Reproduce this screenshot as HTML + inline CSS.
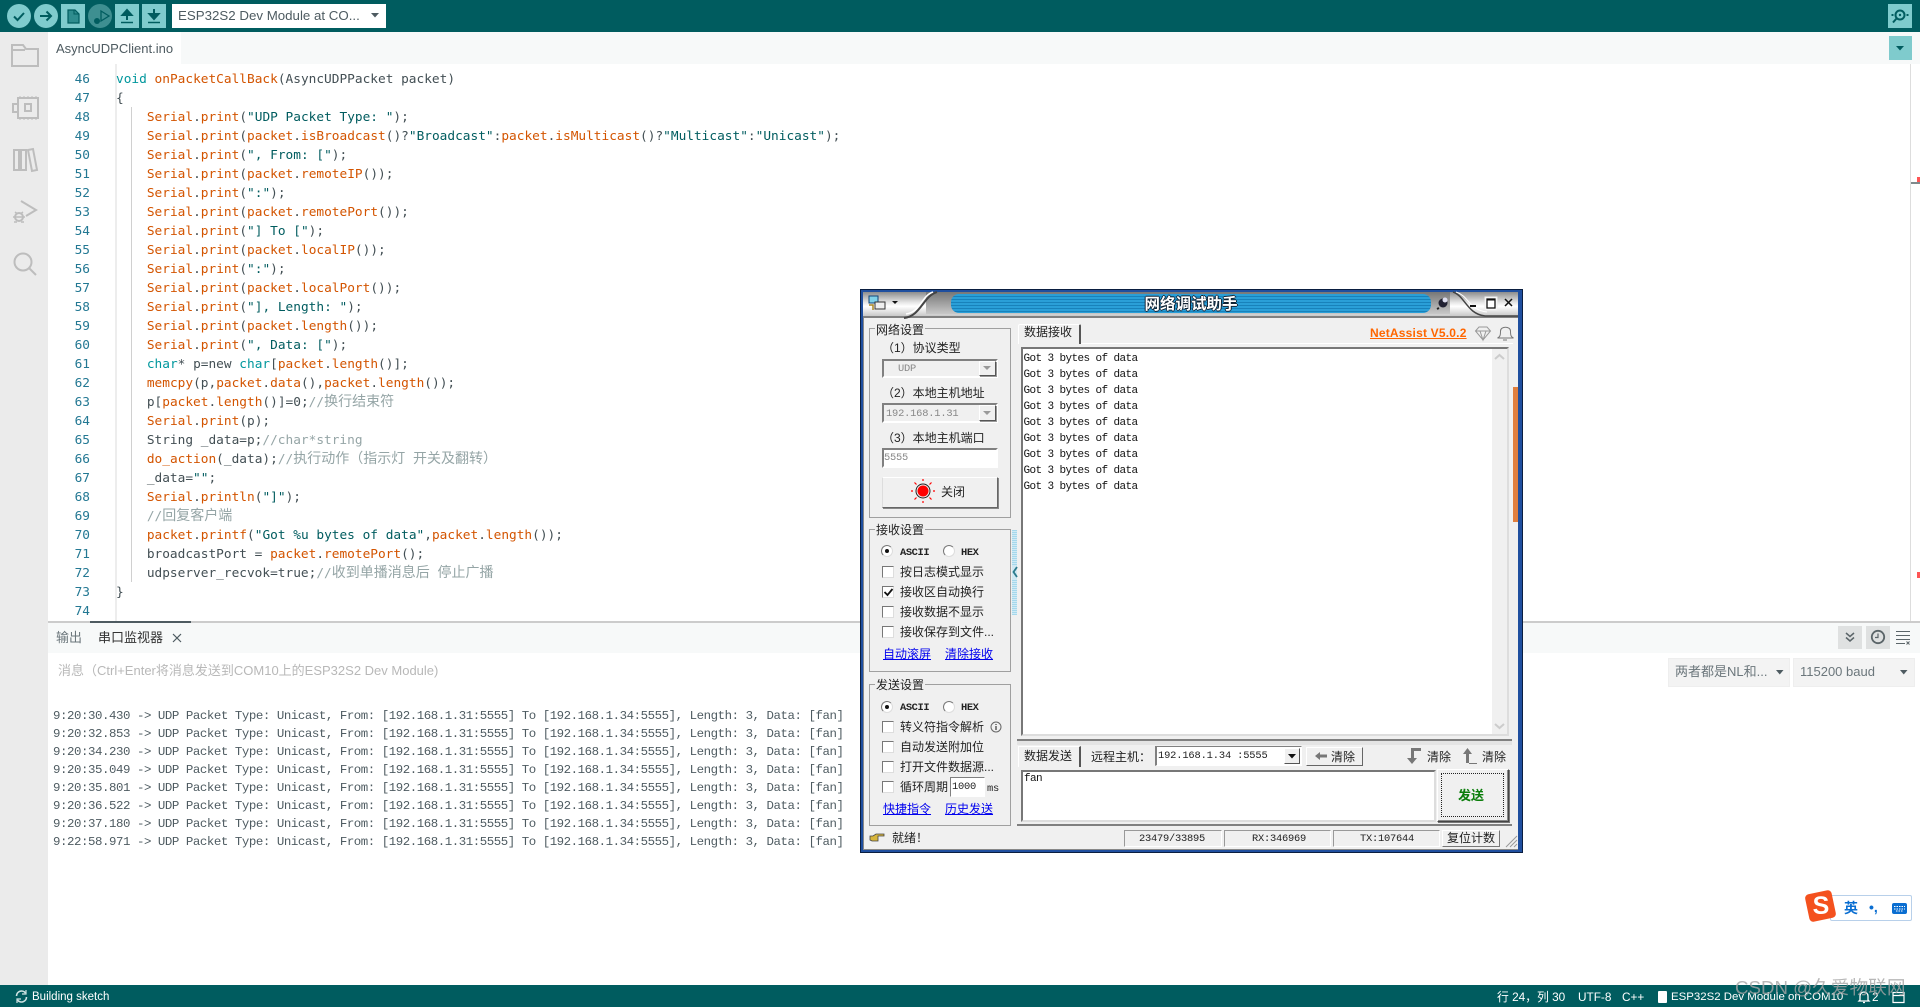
<!DOCTYPE html>
<html lang="zh"><head><meta charset="utf-8"><title>Arduino IDE</title>
<style>
html,body{margin:0;padding:0;width:1920px;height:1007px;overflow:hidden;background:#fff}
body{position:relative;font-family:"Liberation Sans","Noto Sans CJK SC",sans-serif;color:#4e5b61}
.a{position:absolute;box-sizing:border-box}
.t{position:absolute;white-space:nowrap;line-height:16px;height:16px}
svg{position:absolute;overflow:visible}
#code{position:absolute;left:116px;top:69.500px;font:12.8px/19px "DejaVu Sans Mono","Noto Sans CJK SC",monospace;color:#434f54;white-space:pre}
#nums{position:absolute;left:60px;width:30px;top:69.500px;text-align:right;font:12.8px/19px "DejaVu Sans Mono",monospace;color:#237893;white-space:pre}
.f{color:#d35400}.k{color:#00979d}.s{color:#005c5f}.c{color:#95a5a6}
.z{font-size:14px;line-height:0;font-family:"Noto Sans CJK SC",sans-serif}
#ser{position:absolute;left:53px;top:707px;font:12.4px/18px "Liberation Mono",monospace;letter-spacing:-.44px;color:#4e5b61;white-space:pre}
.b{font-family:"Liberation Sans","WenQuanYi Zen Hei","Noto Sans CJK SC",sans-serif;font-size:12px;color:#222}
.m{font-family:"Liberation Mono",monospace;font-size:10.4px;letter-spacing:-.24px;color:#222}
.sunk{border:2px solid;border-color:#808080 #fff #fff #808080;background:#fff}
.grp{border:1px solid #a0a0a0}
.lb{background:#f0f0f0;padding:0 1px}
.cb{position:absolute;width:12px;height:12px;background:#fff;border:1px solid;border-color:#777 #ddd #ddd #777;box-sizing:border-box}
.rd{position:absolute;width:12px;height:12px;border-radius:50%;background:#fff;border:1px solid;border-color:#777 #ddd #ddd #777;box-sizing:border-box}
.lk{color:#0000ee;text-decoration:underline}
.btn{background:#f0f0f0;border:1px solid;border-color:#fff #555 #555 #fff;box-shadow:1px 1px 0 #999}
.tb{position:absolute;width:24px;height:24px;background:#7fcbcd;top:4px}
</style></head><body>

<!-- top bar -->
<div class="a" style="left:0;top:0;width:1920px;height:32px;background:#005c5f"></div>
<div class="a" style="left:7px;top:4px;width:24px;height:24px;border-radius:50%;background:#7fcbcd"></div>
<div class="a" style="left:34px;top:4px;width:24px;height:24px;border-radius:50%;background:#7fcbcd"></div>
<div class="tb" style="left:61px"></div>
<div class="a" style="left:88px;top:4px;width:24px;height:24px;border-radius:50%;background:#3e8f91"></div>
<div class="tb" style="left:115px"></div>
<div class="tb" style="left:142px"></div>
<svg style="left:0;top:0" width="170" height="32" fill="none" stroke="#005c5f" stroke-width="2">
<path d="M14 16.500l3.500 3.500 6.500-7"/>
<path d="M40 16h11M46.500 11.500L51 16l-4.500 4.500"/>
<path d="M68 10h7l4 4v9H68z" fill="#2e8c8e" stroke-width="1.200"/>
<path d="M74 10v4h5" stroke-width="1"/>
<path d="M101 11l8 5-8 5z" stroke="#005c5f" stroke-width="1.300"/>
<circle cx="97" cy="21" r="3" fill="#005c5f" stroke="none"/>
<path d="M127 20v-9M122.500 15l4.500-5 4.500 5z" fill="#005c5f"/><path d="M121 22.500h12" stroke-width="1.500"/>
<path d="M154 9v9M149.500 14l4.500 5 4.500-5z" fill="#005c5f"/><path d="M148 22.500h12" stroke-width="1.500"/>
</svg>
<div class="a" style="left:172px;top:4px;width:214px;height:24px;background:#fff"></div>
<div class="t" style="left:178px;top:8px;font-size:13.300px;color:#4e5b61">ESP32S2 Dev Module at CO...</div>
<svg style="left:371px;top:13px" width="9" height="5"><path d="M0 0h8l-4 4.500z" fill="#4e5b61"/></svg>
<div class="tb" style="left:1888px"></div>
<svg style="left:1888px;top:4px" width="24" height="24" fill="none" stroke="#005c5f" stroke-width="2"><circle cx="12" cy="11" r="4.500"/><circle cx="12" cy="11" r="1.200" fill="#005c5f" stroke="none"/><path d="M8.500 14.500L5 18.500M3.500 11h2M18.500 11h2" /></svg>

<!-- tab bar -->
<div class="a" style="left:48px;top:32px;width:1872px;height:32px;background:#f7f9f9"></div>
<div class="a" style="left:48px;top:32px;width:133px;height:32px;background:#fff"></div>
<div class="t" style="left:56px;top:41px;font-size:13px;color:#4e5b61">AsyncUDPClient.ino</div>
<div class="a" style="left:1889px;top:36px;width:23px;height:24px;background:#7fcbcd"></div>
<svg style="left:1896px;top:46px" width="9" height="5"><path d="M0 0h8l-4 4.500z" fill="#005c5f"/></svg>

<!-- sidebar -->
<div class="a" style="left:0;top:32px;width:48px;height:953px;background:#ebebeb"></div>
<svg style="left:0;top:32px" width="48" height="260" fill="none" stroke="#bdbdbd" stroke-width="2">
<path d="M12 34V13h11l3 4h12v17z"/><path d="M12 18h13"/>
<path d="M18 66h20v20H18zM18 72h-5v8h5"/><rect x="25" y="72" width="6" height="7"/><path d="M20 66v-2M24 66v-2M28 66v-2M32 66v-2M36 66v-2M20 88v-2M24 88v-2M28 88v-2M32 88v-2M36 88v-2" stroke-width="1"/>
<path d="M14 118h5v20h-5zM21 118h5v20h-5zM28 118l5-1 4 21-5 1z"/>
<path d="M21 169l15 9-10 6"/><circle cx="19" cy="185" r="4" stroke-width="2"/><path d="M13 185h12M14 190h3M21 190h3M15 180l2 1.500M23 180l-2 1.500" stroke-width="1.500"/>
<circle cx="23" cy="230" r="8.500"/><path d="M29 236l7 7"/>
</svg>

<!-- editor -->
<div id="nums">46
47
48
49
50
51
52
53
54
55
56
57
58
59
60
61
62
63
64
65
66
67
68
69
70
71
72
73
74</div>
<div class="a" style="left:115px;top:64px;width:2px;height:558px;background:#ededed"></div>
<div class="a" style="left:131px;top:107px;width:1px;height:475px;background:#d0d0d0"></div>
<div id="code"><span class="k">void</span> <span class="f">onPacketCallBack</span>(AsyncUDPPacket packet)
{
    <span class="f">Serial</span>.<span class="f">print</span>(<span class="s">"UDP Packet Type: "</span>);
    <span class="f">Serial</span>.<span class="f">print</span>(<span class="f">packet</span>.<span class="f">isBroadcast</span>()?<span class="s">"Broadcast"</span>:<span class="f">packet</span>.<span class="f">isMulticast</span>()?<span class="s">"Multicast"</span>:<span class="s">"Unicast"</span>);
    <span class="f">Serial</span>.<span class="f">print</span>(<span class="s">", From: ["</span>);
    <span class="f">Serial</span>.<span class="f">print</span>(<span class="f">packet</span>.<span class="f">remoteIP</span>());
    <span class="f">Serial</span>.<span class="f">print</span>(<span class="s">":"</span>);
    <span class="f">Serial</span>.<span class="f">print</span>(<span class="f">packet</span>.<span class="f">remotePort</span>());
    <span class="f">Serial</span>.<span class="f">print</span>(<span class="s">"] To ["</span>);
    <span class="f">Serial</span>.<span class="f">print</span>(<span class="f">packet</span>.<span class="f">localIP</span>());
    <span class="f">Serial</span>.<span class="f">print</span>(<span class="s">":"</span>);
    <span class="f">Serial</span>.<span class="f">print</span>(<span class="f">packet</span>.<span class="f">localPort</span>());
    <span class="f">Serial</span>.<span class="f">print</span>(<span class="s">"], Length: "</span>);
    <span class="f">Serial</span>.<span class="f">print</span>(<span class="f">packet</span>.<span class="f">length</span>());
    <span class="f">Serial</span>.<span class="f">print</span>(<span class="s">", Data: ["</span>);
    <span class="k">char</span>* p=new <span class="k">char</span>[<span class="f">packet</span>.<span class="f">length</span>()];
    <span class="f">memcpy</span>(p,<span class="f">packet</span>.<span class="f">data</span>(),<span class="f">packet</span>.<span class="f">length</span>());
    p[<span class="f">packet</span>.<span class="f">length</span>()]=0;<span class="c">//<span class="z">换行结束符</span></span>
    <span class="f">Serial</span>.<span class="f">print</span>(p);
    String _data=p;<span class="c">//char*string</span>
    <span class="f">do_action</span>(_data);<span class="c">//<span class="z">执行动作（指示灯</span> <span class="z">开关及翻转）</span></span>
    _data=<span class="s">""</span>;
    <span class="f">Serial</span>.<span class="f">println</span>(<span class="s">"]"</span>);
    <span class="c">//<span class="z">回复客户端</span></span>
    <span class="f">packet</span>.<span class="f">printf</span>(<span class="s">"Got %u bytes of data"</span>,<span class="f">packet</span>.<span class="f">length</span>());
    broadcastPort = <span class="f">packet</span>.<span class="f">remotePort</span>();
    udpserver_recvok=true;<span class="c">//<span class="z">收到单播消息后</span> <span class="z">停止广播</span></span>
}</div>
<div class="a" style="left:1910px;top:64px;width:1px;height:558px;background:#ddd"></div>
<div class="a" style="left:1917px;top:177px;width:3px;height:5px;background:#f55"></div>
<div class="a" style="left:1911px;top:182px;width:9px;height:2px;background:#808a8c"></div>
<div class="a" style="left:1917px;top:572px;width:3px;height:6px;background:#f55"></div>

<!-- bottom panel -->
<div class="a" style="left:48px;top:621px;width:1872px;height:2px;background:#ccc"></div>
<div class="a" style="left:48px;top:623px;width:1872px;height:30px;background:#f7f9f9"></div>
<div class="a" style="left:90px;top:621px;width:101px;height:2px;background:#4e5b61"></div>
<div class="t" style="left:56px;top:630px;font-size:13px;color:#6b767b">输出</div>
<div class="t" style="left:98px;top:630px;font-size:13px;color:#333">串口监视器</div>
<svg style="left:172px;top:633px" width="10" height="10" stroke="#4e5b61" stroke-width="1.200"><path d="M1 1l8 8M9 1l-8 8"/></svg>
<div class="t" style="left:58px;top:663px;font-size:13px;color:#b8b8b8">消息（Ctrl+Enter将消息发送到COM10上的ESP32S2 Dev Module)</div>
<div class="a" style="left:1838px;top:626px;width:24px;height:23px;background:#dfe1e1"></div>
<div class="a" style="left:1866px;top:626px;width:24px;height:23px;background:#dfe1e1"></div>
<svg style="left:1838px;top:626px" width="80" height="23" fill="none" stroke="#5b6569" stroke-width="1.500">
<path d="M8 7l4 3.500 4-3.500M8 11.500l4 3.500 4-3.500"/>
<circle cx="40" cy="11" r="6.200" stroke-width="1.800"/><path d="M40 7.500V11.500h-3" stroke-width="1.200"/>
<path d="M58 5.500h14M58 9.500h14M58 13.500h14M58 17.500h9" stroke-width="1"/><path d="M68.500 15.500l3 3M71.500 15.500l-3 3" stroke-width="1"/>
</svg>
<div class="a" style="left:1668px;top:658px;width:122px;height:29px;background:#f3f3f3;border:1px solid #eee"></div>
<div class="a" style="left:1793px;top:658px;width:122px;height:29px;background:#f3f3f3;border:1px solid #eee"></div>
<div class="t" style="left:1675px;top:664px;font-size:13px;color:#6b767b">两者都是NL和...</div>
<div class="t" style="left:1800px;top:664px;font-size:13px;color:#6b767b">115200 baud</div>
<svg style="left:1776px;top:670px" width="9" height="5"><path d="M0 0h7.500l-3.750 4.500z" fill="#4e5b61"/></svg>
<svg style="left:1900px;top:670px" width="9" height="5"><path d="M0 0h7.500l-3.750 4.500z" fill="#4e5b61"/></svg>
<div id="ser">9:20:30.430 -&gt; UDP Packet Type: Unicast, From: [192.168.1.31:5555] To [192.168.1.34:5555], Length: 3, Data: [fan]
9:20:32.853 -&gt; UDP Packet Type: Unicast, From: [192.168.1.31:5555] To [192.168.1.34:5555], Length: 3, Data: [fan]
9:20:34.230 -&gt; UDP Packet Type: Unicast, From: [192.168.1.31:5555] To [192.168.1.34:5555], Length: 3, Data: [fan]
9:20:35.049 -&gt; UDP Packet Type: Unicast, From: [192.168.1.31:5555] To [192.168.1.34:5555], Length: 3, Data: [fan]
9:20:35.801 -&gt; UDP Packet Type: Unicast, From: [192.168.1.31:5555] To [192.168.1.34:5555], Length: 3, Data: [fan]
9:20:36.522 -&gt; UDP Packet Type: Unicast, From: [192.168.1.31:5555] To [192.168.1.34:5555], Length: 3, Data: [fan]
9:20:37.180 -&gt; UDP Packet Type: Unicast, From: [192.168.1.31:5555] To [192.168.1.34:5555], Length: 3, Data: [fan]
9:22:58.971 -&gt; UDP Packet Type: Unicast, From: [192.168.1.31:5555] To [192.168.1.34:5555], Length: 3, Data: [fan]</div>

<!-- status bar -->
<div class="a" style="left:0;top:985px;width:1920px;height:22px;background:#005c5f"></div>
<svg style="left:15px;top:990px" width="13" height="13" fill="none" stroke="#cfe3e3" stroke-width="1.600"><path d="M1.500 6A5 5 0 0 1 10.500 3M11.500 7A5 5 0 0 1 2.500 10"/><path d="M11 0v4H7M2 13V9h4" stroke-width="1.200"/></svg>
<div class="t" style="left:32px;top:989px;font-size:11.500px;color:#fff">Building sketch</div>
<div class="t" style="left:1497px;top:989px;font-size:11.800px;color:#fff">行 24，列 30</div>
<div class="t" style="left:1578px;top:989px;font-size:11.800px;color:#fff">UTF-8</div>
<div class="t" style="left:1622px;top:989px;font-size:11.800px;color:#fff">C++</div>
<div class="a" style="left:1658px;top:991px;width:9px;height:12px;background:#fff;border-radius:1px"></div>
<div class="t" style="left:1671px;top:989px;font-size:11.450px;color:#fff">ESP32S2 Dev Module on COM10</div>
<svg style="left:1857px;top:990px" width="14" height="14" fill="none" stroke="#fff" stroke-width="1.300"><path d="M3 10V6a4 4 0 0 1 8 0v4l1 1H2zM6 12.500h2"/></svg>
<div class="t" style="left:1872px;top:989px;font-size:11.800px;color:#fff">2</div>
<svg style="left:1892px;top:990px" width="13" height="13" fill="none" stroke="#fff" stroke-width="1.200"><path d="M1 2.500h11v10H1zM1 5.500h11"/></svg>
<div class="t" style="left:1735px;top:976px;height:24px;line-height:24px;font-size:18.700px;color:rgba(165,165,165,.8)">CSDN @久爱物联网</div>

<!-- Sogou -->
<div class="a" style="left:1830px;top:895px;width:82px;height:26px;background:#fff;border:1px solid #b8d0ea;border-radius:2px"></div>
<div class="a" style="left:1807px;top:892px;width:27px;height:28px;background:#f4511e;border-radius:4px;transform:rotate(-12deg)"></div>
<div class="t" style="left:1810px;top:896px;width:22px;text-align:center;font:bold 25px/20px 'Liberation Sans',sans-serif;color:#fff;height:20px">S</div>
<div class="t" style="left:1844px;top:900px;font-size:14px;font-weight:bold;color:#0a6ed1">英</div>
<div class="t" style="left:1869px;top:899px;font-size:14px;font-weight:bold;color:#0a6ed1">•,</div>
<div class="a" style="left:1892px;top:903px;width:15px;height:11px;background:#0a6ed1;border-radius:2px"></div>
<svg style="left:1894px;top:905px" width="11" height="7" stroke="#fff" stroke-width="1"><path d="M0 1.500h11M0 4h11M2 6h7" stroke-dasharray="1.500 1"/></svg>

<!-- NetAssist window -->
<div class="a" style="left:860px;top:289px;width:663px;height:564px;background:#f0f0f0;border:1px solid #0a1e40;box-shadow:inset 0 0 0 1px #1f4f9f,inset 0 0 0 2px #1f4f9f,inset 0 0 0 3px #888"></div>
<div class="a" style="left:863px;top:292px;width:657px;height:24px;background:linear-gradient(#8d8d8d,#e9e9e9 45%,#fff 60%,#c8c8c8)"></div>
<div class="a" style="left:863px;top:316px;width:657px;height:2px;background:#808080"></div>
<div class="a" style="left:926px;top:292px;width:524px;height:22px;background:linear-gradient(#777,#c8c8c8)"></div>
<div class="a" style="left:951px;top:294px;width:480px;height:19px;border-radius:8px 8px 8px 8px;background:repeating-linear-gradient(#2a9fd8 0 2px,#1882bb 2px 3px)"></div>
<svg style="left:863px;top:292px" width="657" height="26" fill="none">
<path d="M41 26 C58 24 60 4 74 0" stroke="#444" stroke-width="2"/><path d="M43 22 C58 20 58 4 70 0" stroke="#fff" stroke-width="1.500"/>
<path d="M590 0 C602 4 604 22 622 24H657" stroke="#444" stroke-width="1.500"/><path d="M593 0C606 4 606 18 624 20" stroke="#fff"/>
<rect x="6" y="4" width="9" height="7" fill="#7fd0e8" stroke="#147" stroke-width="1"/><rect x="12" y="10" width="10" height="7" fill="#eee" stroke="#333" stroke-width="1"/><path d="M6 13h4v5" stroke="#a82" stroke-width="1.500"/>
<path d="M29 9h6l-3 3z" fill="#111"/>
<circle cx="580" cy="11" r="4.500" fill="#223"/><circle cx="582" cy="8" r="2.500" fill="#dde"/><path d="M576 16l-2 1" stroke="#222" stroke-width="2"/>
<path d="M607 14h6" stroke="#111" stroke-width="2"/>
<rect x="622" y="5" width="12" height="13" fill="#fff" stroke="#eee"/><rect x="624" y="7" width="8" height="9" stroke="#111" stroke-width="1.300"/><path d="M624 7.500h8" stroke="#111" stroke-width="2"/>
<path d="M642 7l7 7M649 7l-7 7" stroke="#111" stroke-width="1.500"/></svg>
<div class="t" style="left:1118px;top:295px;width:146px;text-align:center;height:17px;line-height:17px;font-family:'WenQuanYi Zen Hei','Noto Sans CJK SC',sans-serif;font-weight:bold;font-size:15.500px;color:#fff;text-shadow:1px 0 0 #123,-1px 0 0 #123,0 1px 0 #123,0 -1px 0 #123">网络调试助手</div>

<!-- group 1 -->
<div class="a grp" style="left:869px;top:328px;width:142px;height:190px"></div>
<div class="t b lb" style="left:875px;top:322px">网络设置</div>
<div class="t b" style="left:882px;top:340px">（1）协议类型</div>
<div class="a sunk" style="left:882px;top:359px;width:116px;height:19px;background:#f0f0f0"></div>
<div class="t m" style="left:898px;top:361px;color:#888">UDP</div>
<div class="a btn" style="left:979px;top:361px;width:17px;height:15px"></div>
<svg style="left:983px;top:366px" width="9" height="5"><path d="M0 0h8l-4 4z" fill="#999"/></svg>
<div class="t b" style="left:882px;top:385px">（2）本地主机地址</div>
<div class="a sunk" style="left:882px;top:403px;width:116px;height:20px;background:#f0f0f0"></div>
<div class="t m" style="left:886px;top:406px;color:#888;letter-spacing:-.2px">192.168.1.31</div>
<div class="a btn" style="left:979px;top:405px;width:17px;height:16px"></div>
<svg style="left:983px;top:411px" width="9" height="5"><path d="M0 0h8l-4 4z" fill="#999"/></svg>
<div class="t b" style="left:882px;top:430px">（3）本地主机端口</div>
<div class="a sunk" style="left:882px;top:448px;width:116px;height:20px"></div>
<div class="t m" style="left:884px;top:450px;color:#888">5555</div>
<div class="a btn" style="left:882px;top:477px;width:116px;height:31px;border-color:#fff #666 #666 #ddd;box-shadow:1px 1px 0 #888"></div>
<svg style="left:911px;top:479px" width="24" height="24"><circle cx="12" cy="12" r="5.500" fill="#f00"/><circle cx="12" cy="12" r="7" fill="none" stroke="#222"/><path d="M12 0v2M12 22v2M0 12h2M22 12h2M3.500 3.500l2 2M18.500 18.500l2 2M3.500 20.500l2-2M18.500 5.500l2-2" stroke="#f00" stroke-width="1.200"/></svg>
<div class="t b" style="left:941px;top:484px">关闭</div>

<!-- group 2 -->
<div class="a grp" style="left:869px;top:529px;width:142px;height:143px"></div>
<div class="t b lb" style="left:875px;top:522px">接收设置</div>
<div class="rd" style="left:881px;top:545px"></div><div class="a" style="left:885px;top:549px;width:4px;height:4px;border-radius:50%;background:#111"></div>
<div class="t m" style="left:900px;top:545px;letter-spacing:-.4px;font-weight:bold">ASCII</div>
<div class="rd" style="left:943px;top:545px"></div>
<div class="t m" style="left:961px;top:545px;letter-spacing:-.4px;font-weight:bold">HEX</div>
<div class="cb" style="left:882px;top:566px"></div><div class="t b" style="left:900px;top:564px">按日志模式显示</div>
<div class="cb" style="left:882px;top:586px"></div><svg style="left:884px;top:588px" width="9" height="9" fill="none" stroke="#111" stroke-width="1.800"><path d="M.5 4l3 3 5-6"/></svg><div class="t b" style="left:900px;top:584px">接收区自动换行</div>
<div class="cb" style="left:882px;top:606px"></div><div class="t b" style="left:900px;top:604px">接收数据不显示</div>
<div class="cb" style="left:882px;top:626px"></div><div class="t b" style="left:900px;top:624px">接收保存到文件...</div>
<div class="t b lk" style="left:883px;top:646px">自动滚屏</div>
<div class="t b lk" style="left:945px;top:646px">清除接收</div>

<!-- group 3 -->
<div class="a grp" style="left:869px;top:684px;width:142px;height:142px"></div>
<div class="t b lb" style="left:875px;top:677px">发送设置</div>
<div class="rd" style="left:881px;top:701px"></div><div class="a" style="left:885px;top:705px;width:4px;height:4px;border-radius:50%;background:#111"></div>
<div class="t m" style="left:900px;top:700px;letter-spacing:-.4px;font-weight:bold">ASCII</div>
<div class="rd" style="left:943px;top:701px"></div>
<div class="t m" style="left:961px;top:700px;letter-spacing:-.4px;font-weight:bold">HEX</div>
<div class="cb" style="left:882px;top:721px"></div><div class="t b" style="left:900px;top:719px">转义符指令解析</div>
<svg style="left:990px;top:721px" width="12" height="12"><circle cx="6" cy="6" r="5" fill="none" stroke="#666"/><path d="M6 5v4M6 3v1" stroke="#444" stroke-width="1.300"/></svg>
<div class="cb" style="left:882px;top:741px"></div><div class="t b" style="left:900px;top:739px">自动发送附加位</div>
<div class="cb" style="left:882px;top:761px"></div><div class="t b" style="left:900px;top:759px">打开文件数据源...</div>
<div class="cb" style="left:882px;top:781px"></div><div class="t b" style="left:900px;top:779px">循环周期</div>
<div class="a sunk" style="left:950px;top:777px;width:35px;height:20px;border-width:1px"></div>
<div class="t m" style="left:952px;top:779px">1000</div>
<div class="t m" style="left:987px;top:781px">ms</div>
<div class="t b lk" style="left:883px;top:801px">快捷指令</div>
<div class="t b lk" style="left:945px;top:801px">历史发送</div>

<!-- status row -->
<svg style="left:869px;top:831px" width="16" height="13"><path d="M1 5h3l3-2h8v2H9v5H3L1 9z" fill="#d7b53c" stroke="#444" stroke-width=".8"/></svg>
<div class="t b" style="left:892px;top:830px">就绪！</div>
<div class="a" style="left:1124px;top:830px;width:98px;height:17px;border:1px solid;border-color:#999 #fff #fff #999"></div>
<div class="a" style="left:1224px;top:830px;width:107px;height:17px;border:1px solid;border-color:#999 #fff #fff #999"></div>
<div class="a" style="left:1333px;top:830px;width:107px;height:17px;border:1px solid;border-color:#999 #fff #fff #999"></div>
<div class="t m" style="left:1139px;top:831px">23479/33895</div>
<div class="t m" style="left:1252px;top:831px">RX:346969</div>
<div class="t m" style="left:1360px;top:831px">TX:107644</div>
<div class="a btn" style="left:1442px;top:830px;width:58px;height:17px;border-color:#fff #777 #777 #fff;box-shadow:none"></div>
<div class="t b" style="left:1447px;top:830px">复位计数</div>
<svg style="left:1505px;top:835px" width="13" height="13" stroke="#999"><path d="M12 1L1 12M12 5L5 12M12 9L9 12"/></svg>

<!-- splitter -->
<div class="a" style="left:1012px;top:530px;width:5px;height:85px;background:repeating-linear-gradient(#a5d8ec 0 1px,#cfeaf5 1px 2px)"></div>
<div class="a" style="left:1012px;top:565px;width:5px;height:14px;background:#cfe9f4"></div>
<svg style="left:1012px;top:566px" width="6" height="12" fill="none" stroke="#2b7a8c" stroke-width="1.800"><path d="M5 1L1.500 6 5 11"/></svg>

<!-- right panel -->
<div class="a" style="left:1018px;top:343px;width:495px;height:1px;background:#fff"></div>
<div class="a" style="left:1018px;top:324px;width:63px;height:20px;background:#f0f0f0;border-top:1px solid #fff;border-left:1px solid #fff;border-right:2px solid #555;border-radius:2px 2px 0 0"></div>
<div class="t b" style="left:1024px;top:324px">数据接收</div>
<div class="t" style="left:1370px;top:325px;font:bold 12px/16px 'Liberation Sans',sans-serif;color:#ff6600;text-decoration:underline;letter-spacing:.2px">NetAssist V5.0.2</div>
<svg style="left:1474px;top:326px" width="44" height="15" fill="none" stroke="#999"><path d="M1.500 5L5 1h8l3.500 4L9 14zM1.500 5h15M6 5l3 9 3-9"/><path d="M23.500 12c3-1 3-4 3-7c0-5 10-5 10 0c0 3 0 6 3 7zM29 14h4" stroke="#777"/></svg>
<div class="a" style="left:1021px;top:347px;width:488px;height:389px;border:2px solid;border-color:#777 #ddd #ddd #777;background:#fff"></div>
<div class="a" style="left:1492px;top:349px;width:15px;height:385px;background:#f0f0f0"></div>
<svg style="left:1494px;top:353px" width="11" height="380" fill="none" stroke="#ccc" stroke-width="2"><path d="M1 6l4.500-4L10 6M1 371l4.500 4 4.500-4"/></svg>
<div class="a" style="left:1513px;top:387px;width:5px;height:135px;background:#e07f3e"></div>
<div class="a" style="left:1518px;top:290px;width:4px;height:562px;background:#1f4f9f"></div>
<div class="a" style="left:1023.500px;top:350.500px;font:11px/16px 'Liberation Mono',monospace;letter-spacing:-.6px;color:#111;white-space:pre">Got 3 bytes of data
Got 3 bytes of data
Got 3 bytes of data
Got 3 bytes of data
Got 3 bytes of data
Got 3 bytes of data
Got 3 bytes of data
Got 3 bytes of data
Got 3 bytes of data</div>
<div class="a" style="left:1017px;top:739px;width:495px;height:2px;background:#808080"></div>
<div class="a" style="left:1017px;top:741px;width:495px;height:4px;background:#e4e4e4"></div>
<div class="a" style="left:1018px;top:746px;width:63px;height:21px;border-right:2px solid #555;border-top:1px solid #fff;border-left:1px solid #fff"></div>
<div class="t b" style="left:1024px;top:748px">数据发送</div>
<div class="t b" style="left:1091px;top:749px">远程主机：</div>
<div class="a sunk" style="left:1155px;top:746px;width:147px;height:20px;border-width:1px 1px 1px 2px"></div>
<div class="t m" style="left:1158px;top:748px;letter-spacing:-.15px">192.168.1.34 :5555</div>
<div class="a btn" style="left:1284px;top:748px;width:16px;height:16px;border-color:#fff #555 #555 #fff;box-shadow:none"></div>
<svg style="left:1288px;top:754px" width="9" height="5"><path d="M0 0h8l-4 4.500z" fill="#111"/></svg>
<div class="a btn" style="left:1306px;top:747px;width:57px;height:19px;border-color:#fff #666 #666 #fff;box-shadow:none"></div>
<svg style="left:1315px;top:751px" width="13" height="10"><path d="M0 5l5-4v2.500h7v3H5V9z" fill="#777"/></svg>
<div class="t b" style="left:1331px;top:749px">清除</div>
<svg style="left:1406px;top:747px" width="18" height="18" fill="#777"><path d="M15 1H5v10H1l5 6 5-6H8V4h7z"/></svg>
<div class="t b" style="left:1427px;top:749px">清除</div>
<svg style="left:1462px;top:747px" width="18" height="18" fill="#777"><path d="M15 17H7V7h3L5.500 1 1 7h3v9h11z"/></svg>
<div class="t b" style="left:1482px;top:749px">清除</div>
<div class="a" style="left:1021px;top:770px;width:415px;height:52px;border:2px solid;border-color:#777 #ddd #ddd #777;background:#fff"></div>
<div class="t" style="left:1024px;top:771px;font:11px/16px 'Liberation Mono',monospace;letter-spacing:-.6px;color:#111">fan</div>
<div class="a" style="left:1437px;top:769px;width:72px;height:53px;background:#f0f0f0;border:1px solid;border-color:#fff #444 #444 #fff;box-shadow:1px 1px 0 #777,inset -1px -1px 0 #888"></div>
<div class="a" style="left:1441px;top:773px;width:63px;height:44px;border:1px dotted #222"></div>
<div class="t" style="left:1458px;top:787px;font:bold 13px/16px 'WenQuanYi Zen Hei','Noto Sans CJK SC',sans-serif;color:#0a7d0a">发送</div>
<div class="a" style="left:1017px;top:824px;width:495px;height:2px;background:#808080"></div>
</body></html>
